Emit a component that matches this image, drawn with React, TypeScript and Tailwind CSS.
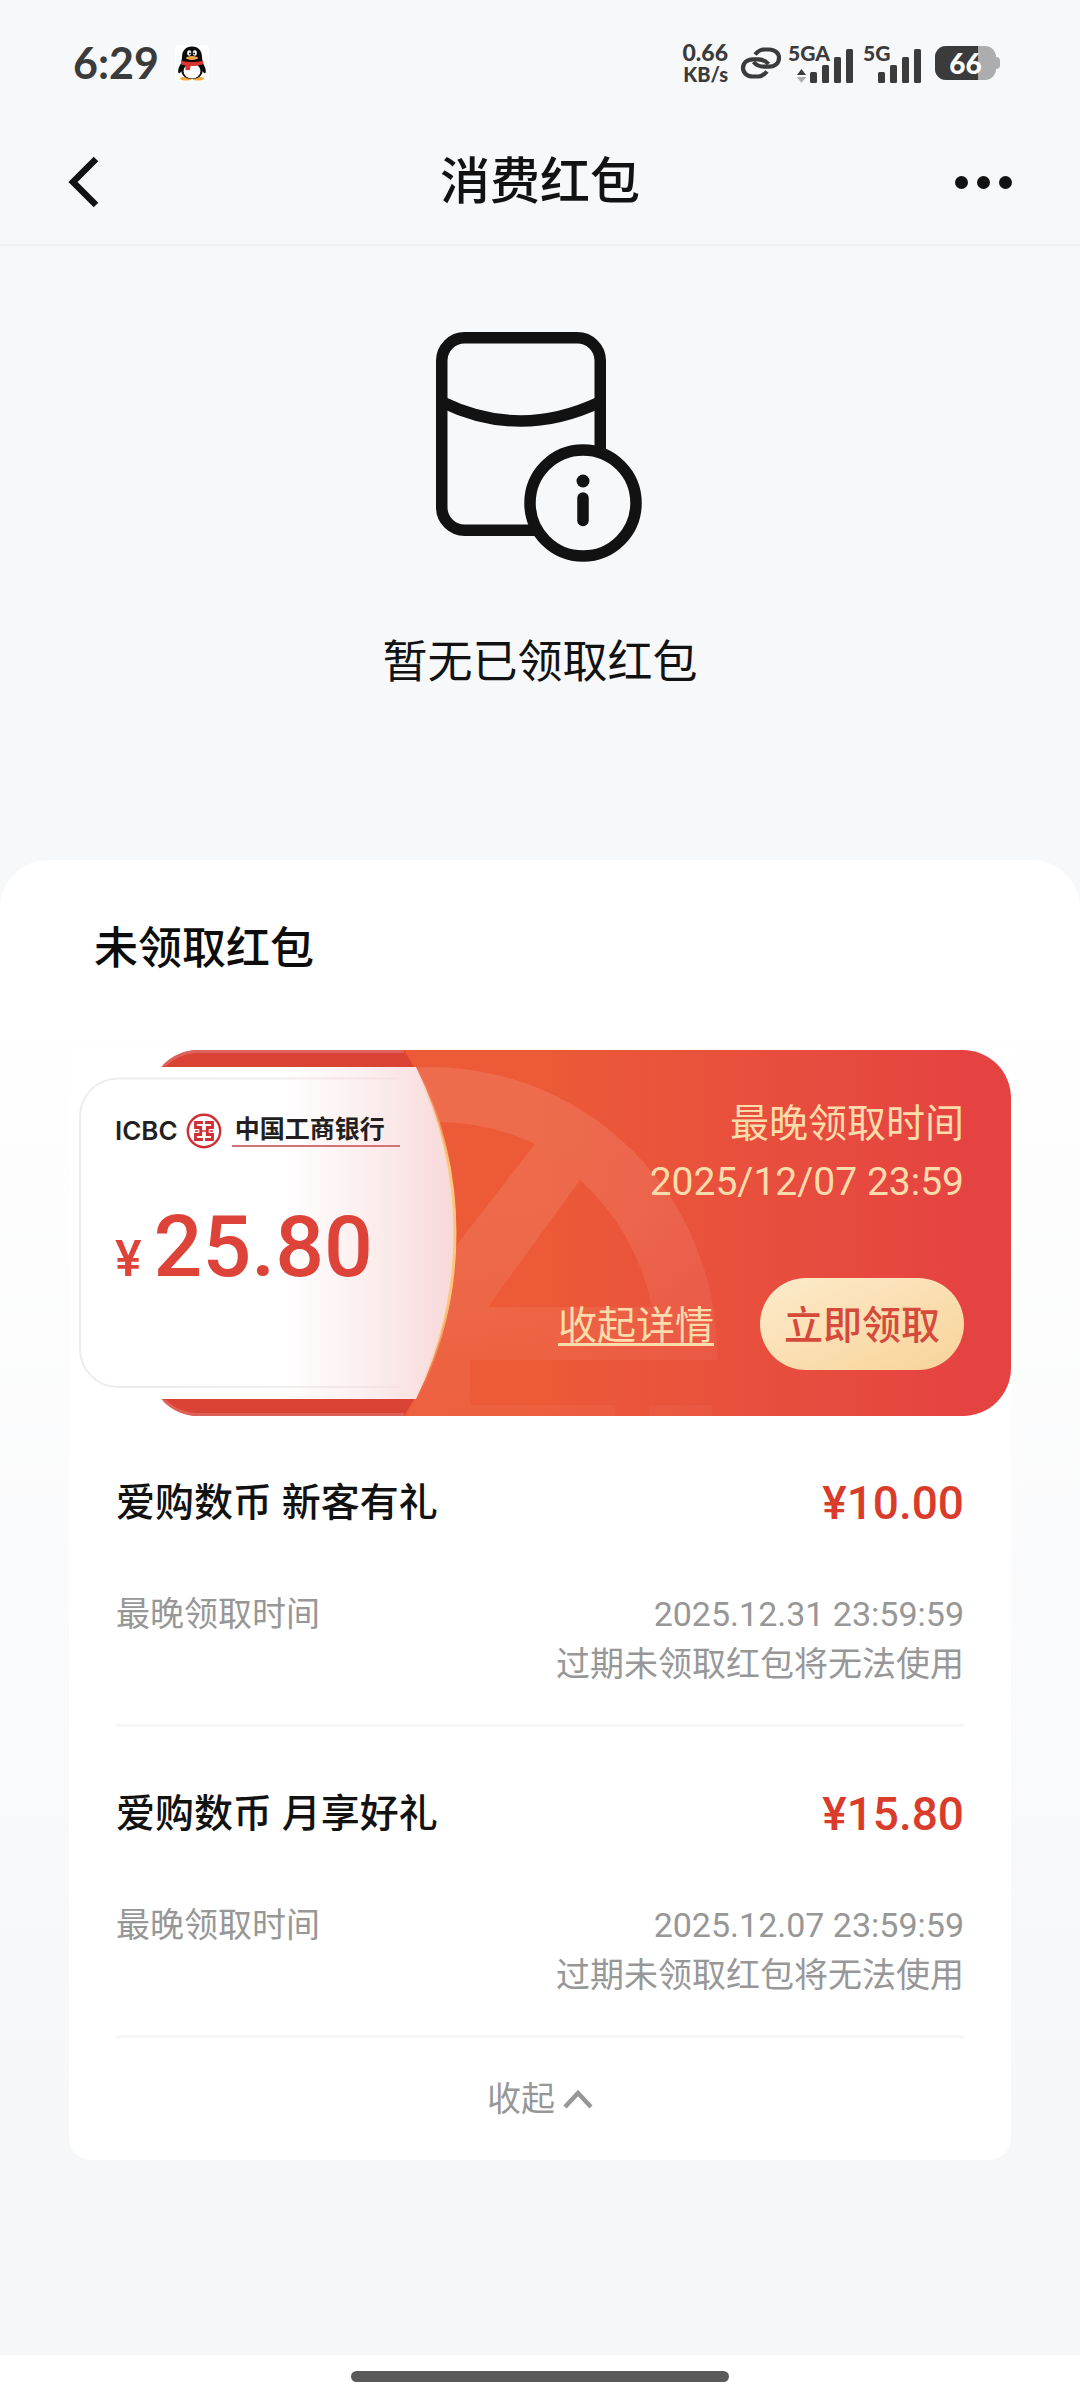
import React, { useState } from "react";

const cjk = "font-['Roboto','Noto_Sans_CJK_SC',sans-serif]";
const latin = "font-['Lato','Noto_Sans_CJK_SC',sans-serif]";

function Penguin() {
  return (
    <svg width="34" height="36" viewBox="0 0 34 36" aria-label="QQ">
      <rect width="34" height="36" rx="4" fill="#fff" />
      <ellipse cx="11" cy="33.6" rx="6" ry="1.9" fill="#f5a83c" />
      <ellipse cx="23" cy="33.6" rx="6" ry="1.9" fill="#f5a83c" />
      <path d="M7 17 C4 21 2.500 25 3.500 28 C4.500 29 6 27 7 25Z M27 17 C30 21 31.500 25 30.500 28 C29.500 29 28 27 27 25Z" fill="#0b0b0b" />
      <path d="M17 1.500 C10.500 1.500 7 6 7 12 L6 20 C5 29 9 34 17 34 C25 34 29 29 28 20 L27 12 C27 6 23.500 1.500 17 1.500Z" fill="#0b0b0b" />
      <ellipse cx="17" cy="26" rx="8.500" ry="7.500" fill="#fff" />
      <ellipse cx="14.200" cy="8" rx="2" ry="2.800" fill="#fff" />
      <ellipse cx="19.800" cy="8" rx="2" ry="2.800" fill="#fff" />
      <circle cx="14.800" cy="8.400" r="1" fill="#111" />
      <circle cx="19.200" cy="8.400" r="1" fill="#111" />
      <ellipse cx="17" cy="13" rx="6" ry="1.900" fill="#f0a24a" />
      <path d="M6 15.500 C13 17.500 21 17.500 28 15.500 L28.500 19 C22 21.500 17 21 15.500 21 L15 25 H10.500 V20.500 L6 19.500Z" fill="#d8362f" />
    </svg>
  );
}

function LinkIcon() {
  return (
    <svg width="42" height="34" viewBox="0 0 42 34" fill="none" stroke="#3b3b3b" strokeWidth="4.200" aria-hidden="true">
      <path d="M15 8.500 C18 5 20.500 3.500 24 3.500 H29 C35 3.500 39 7.200 39 12 C39 17 35 20.700 29 20.700 H24 C19.500 20.700 16.500 19.500 13.500 16" />
      <path d="M27 25.500 C24 29 21.500 30.500 18 30.500 H13 C7 30.500 3 26.800 3 22 C3 17 7 13.300 13 13.300 H18 C22.500 13.300 25.500 14.500 28.500 18" />
    </svg>
  );
}

function Signal({ label, arrows }: { label: string; arrows?: boolean }) {
  return (
    <div className={arrows ? "relative h-[40px] w-[65px]" : "relative h-[40px] w-[58px]"}>
      <span className={latin + " absolute top-0 left-0 text-[21px] leading-[20px] font-black"}>{label}</span>
      <svg className="absolute right-0 bottom-0" width="56" height="36" viewBox="0 0 56 36" aria-hidden="true">
        <g fill="#3b3b3b">
          {arrows && <path d="M0 28 L4.500 22 L9 28Z" />}
          <rect x="13" y="25" width="7" height="11" rx="1.500" />
          <rect x="25" y="18" width="7" height="18" rx="1.500" />
          <rect x="37" y="10" width="7" height="26" rx="1.500" />
          <rect x="49" y="2" width="7" height="34" rx="1.500" />
        </g>
        {arrows && <path d="M0 30 H9 L4.500 36Z" fill="#adadb0" />}
      </svg>
    </div>
  );
}

function Battery() {
  return (
    <div className="flex items-center">
      <div className="relative flex h-[34px] w-[61px] items-center justify-center overflow-hidden rounded-[11px] bg-[#adadb0]">
        <div className="absolute inset-y-0 left-0 w-[43px] bg-[#3b3b3b]" />
        <span className={latin + " relative text-[28px] leading-[34px] font-black text-white"}>66</span>
      </div>
      <div className="h-[12px] w-[4px] rounded-r-[4px] bg-[#adadb0]" />
    </div>
  );
}

function StatusBar() {
  return (
    <div className="flex h-[120px] items-center justify-between pr-[80px] pl-[73px] pt-[6px] text-[#3b3b3b]">
      <div className="flex items-center gap-[16px]">
        <span className={latin + " text-[43px] leading-[48px] font-bold"}>6:29</span>
        <Penguin />
      </div>
      <div className="flex items-center gap-[14px]">
        <div className="flex items-center gap-[6px]">
          <div className={latin + " pr-[6px] text-right leading-[22px] font-black"}>
            <div className="text-[23px]">0.66</div>
            <div className="text-[20px]">KB/s</div>
          </div>
          <LinkIcon />
          <div className="flex items-center gap-[10px]">
            <Signal label="5GA" arrows />
            <Signal label="5G" />
          </div>
        </div>
        <Battery />
      </div>
    </div>
  );
}

function NavBar() {
  return (
    <header className="flex h-[126px] items-center justify-between border-b-2 border-[#eef0f3] px-[68px] text-[#121212]">
      <button type="button" aria-label="返回" className="w-[60px]">
        <svg width="32" height="52" viewBox="0 0 32 52" fill="none" stroke="currentColor" strokeWidth="6.500" aria-hidden="true">
          <path d="M28 3 L5 26 L28 49" />
        </svg>
      </button>
      <h1 className="text-[50px] leading-[60px] font-medium">消费红包</h1>
      <button type="button" aria-label="更多" className="flex w-[60px] justify-end gap-[9px]">
        <span className="size-[13px] rounded-full bg-current" />
        <span className="size-[13px] rounded-full bg-current" />
        <span className="size-[13px] rounded-full bg-current" />
      </button>
    </header>
  );
}

function EmptyState() {
  return (
    <section className="flex h-[614px] flex-col items-center pt-[86px] text-[#121212]">
      <svg width="208" height="230" viewBox="0 0 208 230" fill="none" stroke="#121212" strokeWidth="11.500" aria-hidden="true">
        <rect x="5.750" y="5.750" width="158.500" height="192.500" rx="23" />
        <path d="M6 70 Q84 108 164 70" />
        <circle cx="147" cy="171" r="53" fill="#f7f8fa" />
        <circle cx="147" cy="149" r="6.500" fill="#121212" stroke="none" />
        <path d="M147 166 V188.500" strokeLinecap="round" />
      </svg>
      <p className="mt-[71px] text-[45px] leading-[60px]">暂无已领取红包</p>
    </section>
  );
}

function CouponArt() {
  return (
    <svg className="absolute top-0 left-0" width="660" height="366" viewBox="0 0 660 366" aria-hidden="true">
      <defs>
        <linearGradient id="pane" gradientUnits="userSpaceOnUse" x1="215" y1="0" x2="386" y2="0">
          <stop offset="0" stopColor="#ffffff" />
          <stop offset="0.500" stopColor="#fceeee" />
          <stop offset="1" stopColor="#f8d8d9" />
        </linearGradient>
        <linearGradient id="line" gradientUnits="userSpaceOnUse" x1="0" y1="0" x2="350" y2="0">
          <stop offset="0" stopColor="#ececee" />
          <stop offset="0.600" stopColor="#f0eeee" />
          <stop offset="1" stopColor="#f8dedf" />
        </linearGradient>
        <linearGradient id="edge" gradientUnits="userSpaceOnUse" x1="0" y1="17" x2="0" y2="349">
          <stop offset="0" stopColor="#f9b45f" stopOpacity="0" />
          <stop offset="0.300" stopColor="#fbc77c" />
          <stop offset="0.700" stopColor="#fbc77c" />
          <stop offset="1" stopColor="#f9b45f" stopOpacity="0" />
        </linearGradient>
        <linearGradient id="mark" gradientUnits="userSpaceOnUse" x1="460" y1="17" x2="520" y2="366">
          <stop offset="0" stopColor="#ffffff" stopOpacity="0.110" />
          <stop offset="0.500" stopColor="#ffffff" stopOpacity="0.090" />
          <stop offset="1" stopColor="#ffffff" stopOpacity="0.030" />
        </linearGradient>
      </defs>
      <path
        fill="url(#mark)"
        fillRule="evenodd"
        d="M346 17 H361 A287 287 0 0 1 648 304 V310 H401 V355 H546 V366 H338 L346 349Z
           M371 72 A230 230 0 0 1 466 94 L386 197 L371 90Z
           M511 130 L419 257 H583 A230 230 0 0 0 511 130Z
           M580 355 H643 V366 H580Z"
      />
      <path d="M131 0 H335 L345 17 H94 A50 50 0 0 1 131 0Z" fill="#da4234" />
      <path d="M131 366 H335 L345 349 H94 A50 50 0 0 0 131 366Z" fill="#da4234" />
      <path d="M95 16 A50 50 0 0 1 131 1.500 H335 M95 350 A50 50 0 0 0 131 364.500 H335" fill="none" stroke="#dc615a" strokeWidth="3" />
      <path d="M0 17 H347 A373 373 0 0 1 347 349 H0Z" fill="url(#pane)" />
      <path d="M347 17 A373 373 0 0 1 347 349" fill="none" stroke="url(#edge)" strokeWidth="3" />
      <path d="M330 28.500 H49 A38 38 0 0 0 11 66.500 V299 A38 38 0 0 0 49 337 H330" fill="none" stroke="url(#line)" strokeWidth="2" />
    </svg>
  );
}

function BankLogo() {
  return (
    <div className="flex items-center text-[#231f20]">
      <span className="font-['Inter',sans-serif] text-[26px] leading-[36px] font-semibold">ICBC</span>
      <svg className="ml-[8px]" width="36" height="36" viewBox="0 0 36 36" fill="none" stroke="#cf2e33" aria-hidden="true">
        <circle cx="18" cy="18" r="16.200" strokeWidth="2.400" />
        <g strokeWidth="2.800">
          <path d="M16.900 9.500 H9.500 V14.500 H14.700 V21.500 H9.500 V26.500 H16.900" />
          <path d="M19.100 9.500 H26.500 V14.500 H21.300 V21.500 H26.500 V26.500 H19.100" />
          <path d="M9 18 H12.300 M23.700 18 H27 M14.700 18 H21.300" strokeWidth="1.600" />
        </g>
      </svg>
      <span className="ml-[10px] border-b-2 border-[#d27477] pr-[15px] pl-[3px] text-[25px] leading-[30px] font-bold">中国工商银行</span>
    </div>
  );
}

function Coupon({ open, onToggle }: { open: boolean; onToggle: () => void }) {
  return (
    <div className="relative h-[366px]">
      <div className="absolute inset-y-0 right-0 left-[81px] rounded-[48px] bg-linear-to-r from-[#ec5a37] from-45% via-[#e84f3d] via-70% to-[#e54341] to-95%" />
      <CouponArt />
      <div className="relative flex h-full justify-between pr-[47px] pl-[46px]">
        <div className="pt-[63px]">
          <BankLogo />
          <div className="mt-[48px] flex items-baseline gap-[12px] leading-[100px] font-medium text-[#dd4338]">
            <span className="text-[50px]">¥</span>
            <span className="text-[86px]">25.80</span>
          </div>
        </div>
        <div className="flex flex-col items-end justify-between pt-[45px] pb-[46px] text-[39px] text-[#fddcab]">
          <div className="text-right leading-[58px]">
            <p>最晚领取时间</p>
            <p>2025/12/07 23:59</p>
          </div>
          <div className="flex items-center gap-[46px]">
            <button type="button" onClick={onToggle} className="pt-[4px] leading-[46px] underline decoration-3 underline-offset-4">
              {open ? "收起详情" : "查看详情"}
            </button>
            <button type="button" className="h-[92px] rounded-full bg-linear-to-br from-[#fcebcb] to-[#f8d398] px-[24px] pt-[3px] leading-[60px] font-medium text-[#d64a3b]">
              立即领取
            </button>
          </div>
        </div>
      </div>
    </div>
  );
}

const items = [
  { name: "爱购数币 新客有礼", amount: "¥10.00", until: "2025.12.31 23:59:59" },
  { name: "爱购数币 月享好礼", amount: "¥15.80", until: "2025.12.07 23:59:59" },
];

export default function App() {
  const [open, setOpen] = useState(true);
  const toggle = () => setOpen(!open);
  return (
    <div className={cjk + " flex min-h-screen flex-col bg-[#f7f8fa]"} lang="zh-CN">
      <StatusBar />
      <NavBar />
      <EmptyState />
      <main className="flex-1 rounded-t-[48px] bg-linear-to-b from-white from-5% to-[#f6f7f9] to-85% px-[69px] pt-[59px]">
        <h2 className="pl-[25px] text-[44px] leading-[60px] font-medium text-[#0c0c0c]">未领取红包</h2>
        <div className="mt-[71px] rounded-b-[22px] bg-white">
          <Coupon open={open} onToggle={toggle} />
          {open && (
            <div className="px-[47px]">
              <ul>
                {items.map((it) => (
                  <li key={it.name} className="border-b-3 border-[#f7f7f8] pt-[57px] pb-[35px]">
                    <div className="flex items-center justify-between leading-[60px] font-medium">
                      <h3 className="text-[39px] text-[#121212]">{it.name}</h3>
                      <span className="text-[46px] text-[#d93c2b]">{it.amount}</span>
                    </div>
                    <div className="mt-[56px] flex justify-between text-[34px] leading-[50px] text-[#979797]">
                      <span>最晚领取时间</span>
                      <div className="text-right">
                        <p>{it.until}</p>
                        <p>过期未领取红包将无法使用</p>
                      </div>
                    </div>
                  </li>
                ))}
              </ul>
              <button type="button" onClick={toggle} className="flex h-[122px] w-full items-center justify-center gap-[8px] text-[34px] leading-[50px] text-[#979797]">
                收起
                <svg width="30" height="20" viewBox="0 0 30 20" fill="none" stroke="#979797" strokeWidth="4.500" aria-hidden="true">
                  <path d="M2 18 L15 4 L28 18" />
                </svg>
              </button>
            </div>
          )}
        </div>
      </main>
      <footer className="flex h-[45px] items-center justify-center bg-white pb-[2px]">
        <div className="h-[11px] w-[35%] rounded-full bg-[#5a5a5a]" />
      </footer>
    </div>
  );
}
